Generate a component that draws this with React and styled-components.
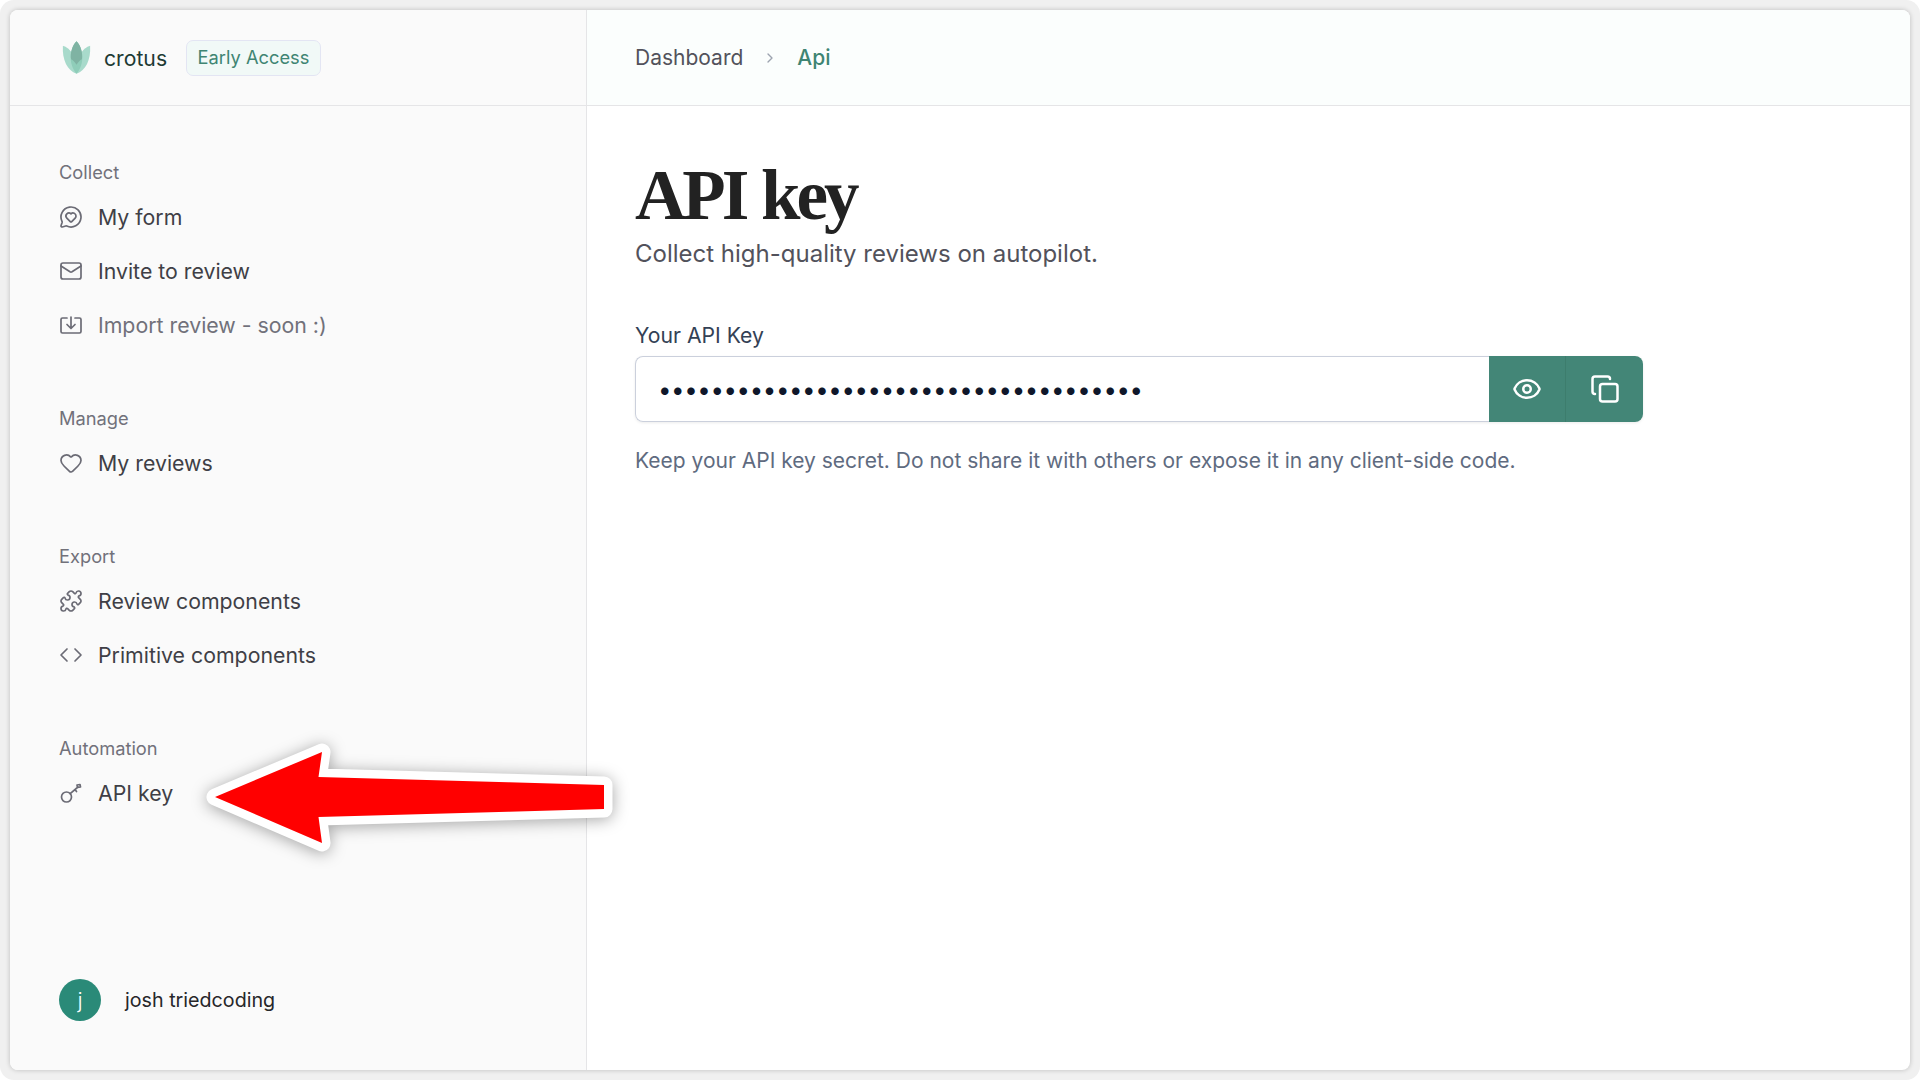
import styled, { createGlobalStyle } from 'styled-components'
import { ChevronRight, Code, Copy, Eye, Heart, Mail, MessageCircleHeart, Puzzle } from 'lucide-react'

const GlobalStyle = createGlobalStyle`
    html, body {
        margin: 0;
        padding: 0;
        background: #ffffff;
    }
    * {
        box-sizing: border-box;
    }
`

const Desktop = styled.div`
    position: relative;
    width: 1920px;
    height: 1080px;
    padding: 10px;
    background: #f0f0f0;
    border-radius: 14px;
    overflow: hidden;
    font-family: Inter, "Liberation Sans", sans-serif;
`

const Janela = styled.div`
    display: flex;
    width: 100%;
    height: 100%;
    background: #ffffff;
    border-radius: 8px;
    overflow: hidden;
    box-shadow: 0 0 5px rgba(0, 0, 0, 0.22);
`

const Sidebar = styled.aside`
    display: flex;
    flex-direction: column;
    flex: 0 0 577px;
    background: #fafafa;
    border-right: 1px solid #e5e5e7;
`

const Marca = styled.div`
    display: flex;
    align-items: center;
    height: 96px;
    padding-left: 52px;
    border-bottom: 1px solid #e5e5e7;
`

const NomeMarca = styled.span`
    margin-left: 13px;
    font-size: 21.2px;
    color: #1d3a34;
`

const Selo = styled.span`
    margin-left: 19px;
    padding: 0 10.5px;
    height: 36px;
    line-height: 33px;
    font-size: 18.3px;
    color: #3f8573;
    background: #f1f9f7;
    border: 1px solid #e3e5f3;
    border-radius: 7px;
`

const Nav = styled.nav`
    display: flex;
    flex-direction: column;
    gap: 54px;
    padding: 54px 0 0 49px;
`

const Grupo = styled.div`
    display: flex;
    flex-direction: column;
`

const GrupoTitulo = styled.div`
    height: 24px;
    line-height: 24px;
    margin-bottom: 6px;
    font-size: 18.3px;
    color: #71717a;
`

const Item = styled.a`
    display: flex;
    align-items: center;
    gap: 15px;
    height: 54px;
    font-size: 21.3px;
    color: ${props => (props.$apagado ? '#71717a' : '#3f3f46')};

    svg {
        flex: 0 0 24px;
        width: 24px;
        height: 24px;
        stroke-width: 1.7;
        color: #6b6b75;
    }
`

const Rodape = styled.div`
    display: flex;
    align-items: center;
    gap: 24px;
    margin-top: auto;
    padding: 0 0 49px 49px;
`

const Avatar = styled.div`
    display: flex;
    align-items: center;
    justify-content: center;
    width: 42px;
    height: 42px;
    border-radius: 50%;
    background: #2a8a78;
    color: #ffffff;
    font-size: 22px;
    font-weight: 300;
`

const NomeUsuario = styled.span`
    font-size: 19.7px;
    color: #27272a;
`

const Principal = styled.main`
    display: flex;
    flex-direction: column;
    flex: 1;
`

const Migalhas = styled.div`
    display: flex;
    align-items: center;
    gap: 19px;
    height: 96px;
    padding-left: 48px;
    background: #fbfefd;
    border-bottom: 1px solid #e5e5e7;
    font-size: 21px;
    color: #52525b;

    svg {
        width: 16px;
        height: 16px;
        color: #9ca3af;
    }
`

const MigalhaAtual = styled.span`
    font-weight: 500;
    color: #3f8573;
`

const Conteudo = styled.section`
    padding: 57px 0 0 48px;
`

const Titulo = styled.h1`
    margin: 0;
    height: 64px;
    line-height: 64px;
    font-family: "Liberation Serif", serif;
    font-size: 71px;
    font-weight: 700;
    letter-spacing: -4px;
    word-spacing: 2px;
    color: #222222;
`

const Subtitulo = styled.p`
    margin: 11px 0 0;
    font-size: 24px;
    line-height: 32px;
    color: #52525b;
`

const Rotulo = styled.label`
    display: block;
    margin-top: 50px;
    font-size: 21.2px;
    line-height: 30px;
    color: #334155;
`

const CampoLinha = styled.div`
    display: flex;
    width: 1008px;
    height: 66px;
    margin-top: 6px;
    border-radius: 8px;
    box-shadow: 0 1px 3px rgba(0, 0, 0, 0.08);
`

const Campo = styled.input`
    flex: 1;
    min-width: 0;
    padding: 0 22px;
    border: 1px solid #cbd0dc;
    border-right: 0;
    border-radius: 8px 0 0 8px;
    outline: none;
    font-family: Inter, sans-serif;
    font-size: 24px;
    letter-spacing: -0.4px;
    color: #0f172a;
`

const BotaoIcone = styled.button`
    display: flex;
    align-items: center;
    justify-content: center;
    width: ${props => (props.$ultimo ? '78px' : '76px')};
    border: 0;
    border-left: ${props => (props.$ultimo ? '1px solid #3d7d6d' : '0')};
    border-radius: ${props => (props.$ultimo ? '0 8px 8px 0' : '0')};
    background: #438677;
    color: #ffffff;

    svg {
        width: 30px;
        height: 30px;
        stroke-width: 2;
    }
`

const Ajuda = styled.p`
    margin: 24px 0 0;
    font-size: 21px;
    line-height: 30px;
    color: #5f6b80;
`

const SetaSvg = styled.svg`
    position: absolute;
    left: 190px;
    top: 720px;
    filter: drop-shadow(0 2px 8px rgba(0, 0, 0, 0.35));
`

const IconeImportar = () => (
    <svg viewBox="0 0 24 24" fill="none" stroke="currentColor" strokeLinecap="round" strokeLinejoin="round">
        <path d="M8 5H3.500A1.500 1.500 0 0 0 2 6.500v12A1.500 1.500 0 0 0 3.500 20h17a1.500 1.500 0 0 0 1.500-1.500v-12A1.500 1.500 0 0 0 20.500 5H16" />
        <path d="M12 4v11M8 11.500l4 4 4-4" />
    </svg>
)

const IconeChave = () => (
    <svg viewBox="0 0 24 24" fill="none" stroke="currentColor" strokeLinecap="round" strokeLinejoin="round">
        <circle cx="7.500" cy="16" r="5" />
        <path d="M11.200 12.700 19 6M16 8.600l1.500 2M18.500 6.500l-.5-2.500 3-.5.500 2.500z" />
    </svg>
)

const LogoCrotus = () => (
    <svg width="29" height="37" viewBox="0 0 32 38">
        <path d="M1 6c6 2 15 8 15 31C6 33 0 22 1 6z" fill="#a8dacb" />
        <path d="M31 6c-6 2-15 8-15 31 10-4 16-15 15-31z" fill="#a8dacb" />
        <path d="M16 1c-7 7-10 24 0 36 10-12 7-29 0-36z" fill="#8fcdb9" />
        <path d="M16 1c-5 5-7 13-6 20 2 1 4 3 6 6 2-3 4-5 6-6 1-7-1-15-6-20z" fill="#7fb3a3" />
    </svg>
)

const pontosSeta = '215,797 322,752 318.500,777 604,785 604,809 318.500,817 322,843'

const Seta = () => (
    <SetaSvg width="440" height="150" viewBox="190 720 440 150">
        <polygon points={pontosSeta} fill="#ff0000" stroke="#ffffff" strokeWidth="17" strokeLinejoin="round" />
        <polygon points={pontosSeta} fill="#ff0000" />
    </SetaSvg>
)

const grupos = [
    {
        titulo: 'Collect',
        itens: [
            { nome: 'My form', icone: <MessageCircleHeart /> },
            { nome: 'Invite to review', icone: <Mail /> },
            { nome: 'Import review - soon :)', icone: <IconeImportar />, apagado: true }
        ]
    },
    {
        titulo: 'Manage',
        itens: [{ nome: 'My reviews', icone: <Heart /> }]
    },
    {
        titulo: 'Export',
        itens: [
            { nome: 'Review components', icone: <Puzzle /> },
            { nome: 'Primitive components', icone: <Code /> }
        ]
    },
    {
        titulo: 'Automation',
        itens: [{ nome: 'API key', icone: <IconeChave /> }]
    }
]

const App = () => {
    return (
        <Desktop>
            <GlobalStyle />
            <Janela>
                <Sidebar>
                    <Marca>
                        <LogoCrotus />
                        <NomeMarca>crotus</NomeMarca>
                        <Selo>Early Access</Selo>
                    </Marca>
                    <Nav>
                        {grupos.map(grupo => (
                            <Grupo key={grupo.titulo}>
                                <GrupoTitulo>{grupo.titulo}</GrupoTitulo>
                                {grupo.itens.map(item => (
                                    <Item key={item.nome} $apagado={item.apagado}>
                                        {item.icone}
                                        {item.nome}
                                    </Item>
                                ))}
                            </Grupo>
                        ))}
                    </Nav>
                    <Rodape>
                        <Avatar>j</Avatar>
                        <NomeUsuario>josh triedcoding</NomeUsuario>
                    </Rodape>
                </Sidebar>
                <Principal>
                    <Migalhas>
                        <span>Dashboard</span>
                        <ChevronRight />
                        <MigalhaAtual>Api</MigalhaAtual>
                    </Migalhas>
                    <Conteudo>
                        <Titulo>API key</Titulo>
                        <Subtitulo>Collect high-quality reviews on autopilot.</Subtitulo>
                        <Rotulo>Your API Key</Rotulo>
                        <CampoLinha>
                            <Campo type="password" readOnly value="abcdefghijklmnopqrstuvwxyz0123456789a" />
                            <BotaoIcone><Eye /></BotaoIcone>
                            <BotaoIcone $ultimo><Copy /></BotaoIcone>
                        </CampoLinha>
                        <Ajuda>Keep your API key secret. Do not share it with others or expose it in any client-side code.</Ajuda>
                    </Conteudo>
                </Principal>
            </Janela>
            <Seta />
        </Desktop>
    )
}

export default App
